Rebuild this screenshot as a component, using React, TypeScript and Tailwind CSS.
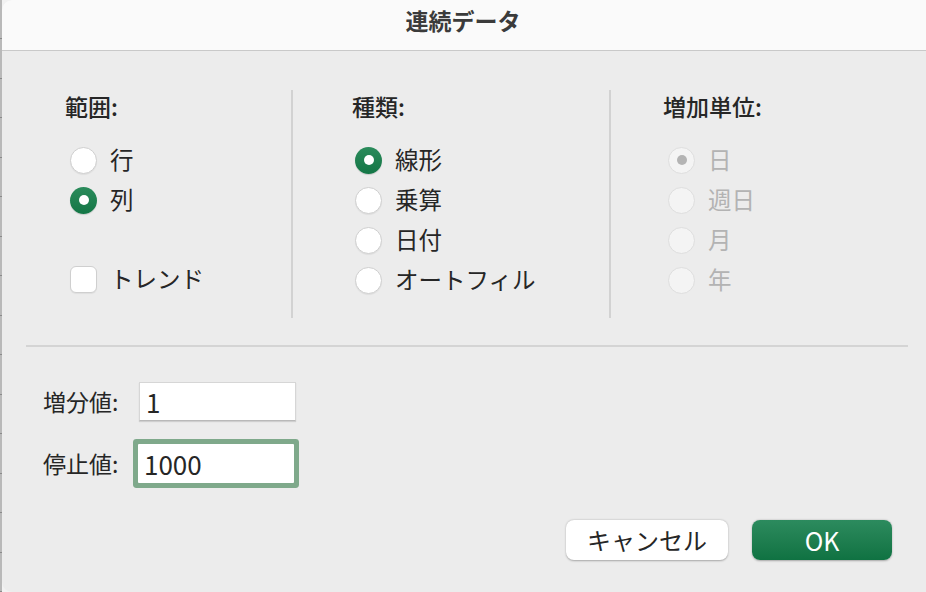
import React from "react";

const font = { fontFamily: '"Noto Sans CJK JP", "Noto Sans", sans-serif' };

function Radio({ checked, disabled }: { checked?: boolean; disabled?: boolean }) {
  if (checked && !disabled) {
    return (
      <span className="flex h-[27px] w-[27px] shrink-0 items-center justify-center rounded-full bg-gradient-to-b from-[#2a8b5b] to-[#137646] shadow-[0_1px_1px_rgba(0,0,0,0.15)]">
        <span className="h-[10px] w-[10px] rounded-full bg-white" />
      </span>
    );
  }
  if (disabled) {
    return (
      <span className="flex h-[27px] w-[27px] shrink-0 items-center justify-center rounded-full border border-[#dedede] bg-[#f4f4f4]">
        {checked && <span className="h-[10px] w-[10px] rounded-full bg-[#b4b4b4]" />}
      </span>
    );
  }
  return (
    <span className="h-[27px] w-[27px] shrink-0 rounded-full border border-[#cfcfcf] bg-white shadow-[0_1px_1px_rgba(0,0,0,0.06)]" />
  );
}

function Row({
  label,
  checked,
  disabled,
}: {
  label: string;
  checked?: boolean;
  disabled?: boolean;
}) {
  return (
    <div className="flex h-[40px] items-center gap-[13px]">
      <Radio checked={checked} disabled={disabled} />
      <span className={`text-[23.5px] leading-none ${disabled ? "text-[#b3b3b3]" : "text-[#262626]"}`}>
        {label}
      </span>
    </div>
  );
}

function Header({ children }: { children: React.ReactNode }) {
  return (
    <div className="flex h-[32px] items-center text-[23px] font-medium leading-none text-[#262626]">
      {children}
    </div>
  );
}

export default function App() {
  return (
    <div className="flex h-[592px] w-[926px] overflow-hidden bg-[#f2f2f2]" style={font}>
      {/* sheet edge behind the dialog */}
      <div className="flex w-[2px] shrink-0 flex-col bg-[#b9b9b9]">
        {Array.from({ length: 15 }).map((_, i) => (
          <div key={i} className="h-[40px] border-b border-[#8a8a8a]" />
        ))}
      </div>

      <div className="flex flex-1 flex-col overflow-hidden rounded-tl-[10px] rounded-bl-[10px] bg-[#ececec]">
        {/* title bar */}
        <div className="flex h-[51px] shrink-0 items-center justify-center border-b border-[#c9c9c9] bg-[#fafafa] pb-[9px] pr-[2px]">
          <span className="text-[23px] font-bold leading-none text-[#3b3b3b]">連続データ</span>
        </div>

        <div className="flex flex-col pl-[24px] pr-[18px] pt-[39px]">
          {/* options */}
          <div className="flex h-[228px]">
            <div className="w-[265px] pl-[39px]">
              <Header>範囲:</Header>
              <div className="mt-[18px] pl-[5px]">
                <Row label="行" />
                <Row label="列" checked />
                <div className="h-[40px]" />
                <div className="flex h-[38px] items-center gap-[13px]">
                  <span className="h-[27px] w-[27px] shrink-0 rounded-[6px] border border-[#cfcfcf] bg-white shadow-[0_1px_1px_rgba(0,0,0,0.06)]" />
                  <span className="text-[23.5px] leading-none text-[#262626]">トレンド</span>
                </div>
              </div>
            </div>
            <div className="w-[2px] bg-[#d2d2d2]" />
            <div className="w-[316px] pl-[59px]">
              <Header>種類:</Header>
              <div className="mt-[18px] pl-[3px]">
                <Row label="線形" checked />
                <Row label="乗算" />
                <Row label="日付" />
                <Row label="オートフィル" />
              </div>
            </div>
            <div className="w-[2px] bg-[#d2d2d2]" />
            <div className="flex-1 pl-[52px]">
              <Header>増加単位:</Header>
              <div className="mt-[18px] pl-[5px]">
                <Row label="日" checked disabled />
                <Row label="週日" disabled />
                <Row label="月" disabled />
                <Row label="年" disabled />
              </div>
            </div>
          </div>

          <div className="mt-[27px] h-[2px] bg-[#d4d4d4]" />

          {/* values */}
          <div className="mt-[35px] flex flex-col gap-[23px] pl-[17px]">
            <div className="flex items-center">
              <span className="w-[96px] text-[23px] leading-none text-[#262626]">増分値:</span>
              <div className="flex h-[39px] w-[157px] items-center border border-[#d6d6d6] border-b-[#b9b9b9] bg-white pl-[6px] shadow-[0_1px_1px_rgba(0,0,0,0.12)]">
                <span className="text-[26px] leading-none text-[#262626]">1</span>
              </div>
            </div>
            <div className="flex items-center">
              <span className="w-[95px] text-[23px] leading-none text-[#262626]">停止値:</span>
              <div className="flex h-[39px] w-[156px] items-center rounded-[1px] bg-white pl-[6px] shadow-[0_0_0_5px_#7fa98b]">
                <span className="text-[26px] leading-none text-[#262626]">1000</span>
              </div>
            </div>
          </div>

          {/* buttons */}
          <div className="mt-[37px] flex justify-end gap-[24px] pr-[16px]">
            <button className="flex h-[40px] w-[162px] items-center justify-center rounded-[8px] bg-white text-[24px] leading-none text-[#262626] shadow-[0_0.5px_2px_rgba(0,0,0,0.3)]">
              キャンセル
            </button>
            <button className="flex h-[40px] w-[140px] items-center justify-center rounded-[8px] bg-gradient-to-b from-[#2c8b5e] to-[#0f7242] text-[25px] leading-none text-white shadow-[0_0.5px_2px_rgba(0,0,0,0.3)]">
              OK
            </button>
          </div>
        </div>
      </div>
    </div>
  );
}
